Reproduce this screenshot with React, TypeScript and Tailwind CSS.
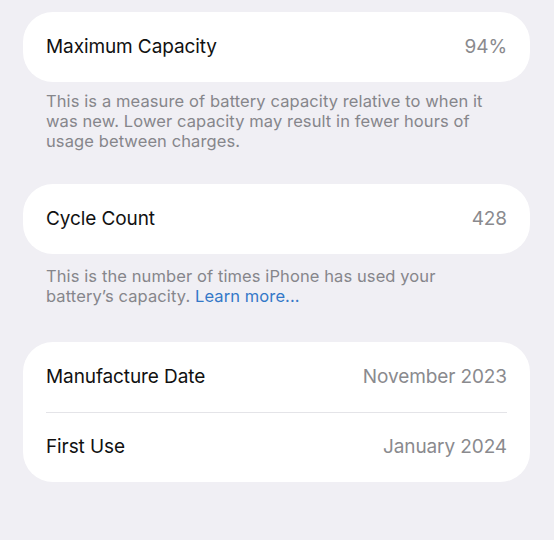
import React from 'react';

type Row = { label: string; value: string };

const font = { fontFamily: 'Inter, "Noto Sans", sans-serif' };

const Card = ({ rows }: { rows: Row[] }) => (
  <div className="bg-white rounded-[30px] px-[23px]">
    {rows.map((row, i) => (
      <div
        key={row.label}
        className={`flex items-center justify-between h-[70px] ${
          i > 0 ? 'border-t border-[#e4e4e8]' : ''
        }`}
      >
        <span className="text-[19px] text-[#111] tracking-[-0.1px]">{row.label}</span>
        <span className="text-[19px] text-[#8a8a8e] tracking-[-0.1px]">{row.value}</span>
      </div>
    ))}
  </div>
);

export default function App() {
  return (
    <div className="min-h-screen w-[554px] h-[540px] bg-[#f0eff4] pl-[23px] pr-[24px] pt-[12px]" style={font}>
      <Card rows={[{ label: 'Maximum Capacity', value: '94%' }]} />
      <p className="mt-[9px] px-[23px] text-[16.5px] leading-[20px] tracking-[0.1px] text-[#86868b]">
        This is a measure of battery capacity relative to when it
        <br />
        was new. Lower capacity may result in fewer hours of
        <br />
        usage between charges.
      </p>

      <div className="mt-[33px]">
        <Card rows={[{ label: 'Cycle Count', value: '428' }]} />
      </div>
      <p className="mt-[12px] px-[23px] text-[16.5px] leading-[20px] tracking-[0.1px] text-[#86868b]">
        This is the number of times iPhone has used your
        <br />
        battery’s capacity. <span className="text-[#3478c8]">Learn more...</span>
      </p>

      <div className="mt-[36px]">
        <Card
          rows={[
            { label: 'Manufacture Date', value: 'November 2023' },
            { label: 'First Use', value: 'January 2024' },
          ]}
        />
      </div>
    </div>
  );
}
